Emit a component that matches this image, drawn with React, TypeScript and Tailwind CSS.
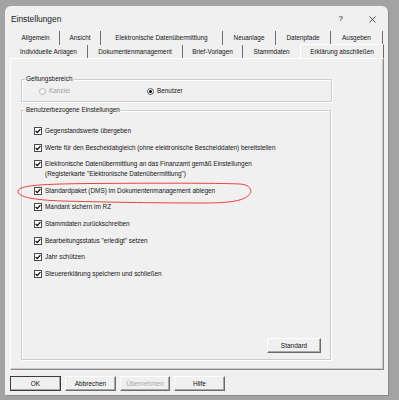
import React from "react";

const rowOne = [
  { label: "Allgemein", w: "w-[48px]" },
  { label: "Ansicht", w: "w-[41px]" },
  { label: "Elektronische Datenübermittlung", w: "w-[122px]" },
  { label: "Neuanlage", w: "w-[53px]" },
  { label: "Datenpfade", w: "w-[55px]" },
  { label: "Ausgeben", w: "w-[52px]" },
];

const rowTwo = [
  { label: "Individuelle Anlagen", w: "w-[78px]", sep: true },
  { label: "Dokumentenmanagement", w: "w-[95px]", sep: true },
  { label: "Brief-Vorlagen", w: "w-[60px]", sep: true },
  { label: "Stammdaten", w: "w-[57px]", sep: false },
];

const options = [
  ["Gegenstandswerte übergeben"],
  ["Werte für den Bescheidabgleich (ohne elektronische Bescheiddaten) bereitstellen"],
  [
    "Elektronische Datenübermittlung an das Finanzamt gemäß Einstellungen",
    "(Registerkarte \"Elektronische Datenübermittlung\")",
  ],
  ["Standardpaket (DMS) im Dokumentenmanagement ablegen"],
  ["Mandant sichern im RZ"],
  ["Stammdaten zurückschreiben"],
  ["Bearbeitungsstatus \"erledigt\" setzen"],
  ["Jahr schützen"],
  ["Steuererklärung speichern und schließen"],
];

function CheckBox() {
  return (
    <div className="w-[8px] h-[8px] mt-[1px] shrink-0 bg-white border border-[#4a4a4a] flex items-center justify-center">
      <svg width="6" height="6" viewBox="0 0 6 6">
        <path d="M0.6 2.9 L2.3 4.6 L5.4 1.2" fill="none" stroke="#000" strokeWidth="1.2" />
      </svg>
    </div>
  );
}

function Button({ label, w, disabled, def }: { label: string; w: string; disabled?: boolean; def?: boolean }) {
  return (
    <div
      className={`${w} h-[15px] flex items-center justify-center text-[6.5px] ${
        def ? "border border-[#3c3c3c]" : "border border-t-[#fdfdfd] border-l-[#fdfdfd] border-r-[#6a6a6a] border-b-[#6a6a6a]"
      } ${disabled ? "text-[#a6a6a6]" : "text-[#111]"} shadow-[inset_-1px_-1px_0_#a9a9a9]`}
    >
      {label}
    </div>
  );
}

export default function App() {
  return (
    <div className="relative w-[399px] h-[400px] bg-[#a3a3a3] pt-[6px] pl-[5px] overflow-hidden font-['Liberation_Sans',Arial,sans-serif] text-[#151515]">
      <div className="w-[383px] h-[389px] bg-[#f0f0f0] rounded-t-[6px] flex flex-col shadow-[1px_1px_0_#8a8a8a]">
        {/* title bar */}
        <div className="h-[25px] flex items-center pl-[6px] pt-[1px]">
          <span className="text-[8.4px] leading-[12px] text-[#1a1a1a]">Einstellungen</span>
          <span className="ml-auto text-[8px] leading-[12px] mr-[26px]">?</span>
          <svg className="mr-[12px]" width="7" height="7" viewBox="0 0 7 7">
            <path d="M0.5 0.5 L6.5 6.5 M6.5 0.5 L0.5 6.5" stroke="#222" strokeWidth="0.8" fill="none" />
          </svg>
        </div>

        {/* tabs */}
        <div className="h-[14px] flex pl-[7px] text-[6.4px]">
          {rowOne.map((t) => (
            <div key={t.label} className={`${t.w} h-[14px] flex items-center justify-center border-r border-[#6f6f6f] leading-[10px]`}>
              {t.label}
            </div>
          ))}
        </div>
        <div className="h-[13px] flex pl-[5px] text-[6.4px]">
          {rowTwo.map((t) => (
            <div
              key={t.label}
              className={`${t.w} h-[13px] flex items-center justify-center leading-[10px] ${t.sep ? "border-r border-[#6f6f6f]" : ""}`}
            >
              {t.label}
            </div>
          ))}
          <div className="relative z-10 w-[84px] h-[14px] -mt-[1px] bg-[#f0f0f0] border-t border-l border-r border-t-white border-l-white border-r-[#6a6a6a] flex items-center justify-center leading-[10px]">
            Erklärung abschließen
          </div>
        </div>

        {/* panel */}
        <div className="ml-[5px] w-[374px] h-[312px] border border-t-white border-l-white border-r-[#8a8a8a] border-b-[#8a8a8a] shadow-[inset_-1px_-1px_0_#c9c9c9] text-[6.4px] leading-[10px]">
          <div className="relative ml-[10px] mt-[20px] w-[311px] h-[23px] border border-[#cdcdcd] shadow-[inset_1px_1px_0_#fff,1px_1px_0_#fff] pt-[6px] pl-[17px] flex">
            <span className="absolute -top-[6px] left-[3px] px-[1px] bg-[#f0f0f0]">Geltungsbereich</span>
            <div className="w-[108px] flex items-center gap-[3px] text-[#a0a0a0] h-[10px]">
              <div className="w-[7px] h-[7px] rounded-full border border-[#b8b8b8] bg-[#f4f4f4]" />
              <span>Kanzlei</span>
            </div>
            <div className="flex items-center gap-[3px] h-[10px]">
              <div className="w-[7px] h-[7px] rounded-full border border-[#555] bg-white flex items-center justify-center">
                <div className="w-[3px] h-[3px] rounded-full bg-black" />
              </div>
              <span>Benutzer</span>
            </div>
          </div>

          <div className="relative ml-[10px] mt-[8px] w-[310px] h-[250px] border border-[#cdcdcd] shadow-[inset_1px_1px_0_#fff,1px_1px_0_#fff] pt-[15px] pl-[12px] flex flex-col">
            <span className="absolute -top-[6px] left-[3px] px-[1px] bg-[#f0f0f0]">Benutzerbezogene Einstellungen</span>
            <div className="flex flex-col gap-[6.6px]">
              {options.map((lines) => (
                <div key={lines[0]} className="flex gap-[3px]">
                  <CheckBox />
                  <div className="flex flex-col">
                    {lines.map((l) => (
                      <span key={l} className="whitespace-nowrap">{l}</span>
                    ))}
                  </div>
                </div>
              ))}
            </div>
            <div className="mt-auto self-end mr-[9px] mb-[6px]">
              <Button label="Standard" w="w-[54px]" />
            </div>
          </div>
        </div>

        {/* bottom buttons */}
        <div className="mt-[6px] ml-[5px] flex gap-[4px]">
          <Button label="OK" w="w-[51px]" def />
          <Button label="Abbrechen" w="w-[51px]" />
          <Button label="Übernehmen" w="w-[50px]" disabled />
          <Button label="Hilfe" w="w-[51px]" />
        </div>
      </div>

      {/* red annotation */}
      <svg className="absolute left-0 top-0 pointer-events-none" width="399" height="400">
        <path
          d="M62 201 C34 200 17 197 18 191 C19 185 45 184 90 183.5 C160 183 215 183 240 184 C252 185 253 192 248 196 C242 201 228 203 205 203 C150 203 100 202 62 201"
          fill="none"
          stroke="#e8453c"
          strokeWidth="1"
        />
      </svg>
    </div>
  );
}
